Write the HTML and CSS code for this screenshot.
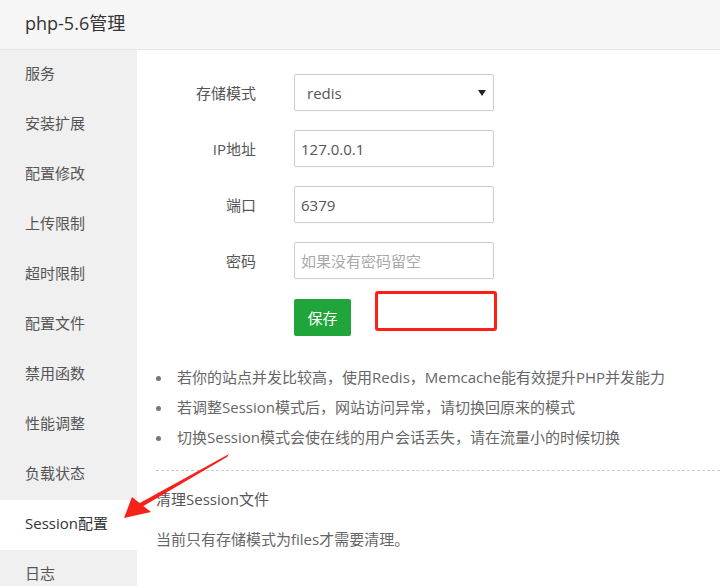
FILE: index.html
```html
<!DOCTYPE html>
<html lang="zh-CN">
<head>
<meta charset="utf-8">
<title>php-5.6管理</title>
<link rel="stylesheet" href="styles.css">
</head>
<body>
<div class="page">
  <div class="header">php-5.6管理</div>
  <div class="main">
    <ul class="sidebar">
      <li>服务</li>
      <li>安装扩展</li>
      <li>配置修改</li>
      <li>上传限制</li>
      <li>超时限制</li>
      <li>配置文件</li>
      <li>禁用函数</li>
      <li>性能调整</li>
      <li>负载状态</li>
      <li class="active">Session配置</li>
      <li>日志</li>
    </ul>
    <div class="content">
      <div class="form">
        <div class="row">
          <label class="label">存储模式</label>
          <div class="select-wrap">
            <select class="field select">
              <option>redis</option>
              <option>files</option>
              <option>memcache</option>
            </select>
          </div>
        </div>
        <div class="row">
          <label class="label">IP地址</label>
          <input class="field" type="text" value="127.0.0.1">
        </div>
        <div class="row">
          <label class="label">端口</label>
          <input class="field" type="text" value="6379">
        </div>
        <div class="row">
          <label class="label">密码</label>
          <input class="field" type="text" placeholder="如果没有密码留空">
        </div>
        <div class="row buttons">
          <span class="label"></span>
          <button class="btn-save">保存</button>
          <span class="red-box"></span>
        </div>
      </div>
      <ul class="tips">
        <li>若你的站点并发比较高，使用Redis，Memcache能有效提升PHP并发能力</li>
        <li>若调整Session模式后，网站访问异常，请切换回原来的模式</li>
        <li>切换Session模式会使在线的用户会话丢失，请在流量小的时候切换</li>
      </ul>
      <div class="clean">
        <div class="clean-title">清理Session文件</div>
        <div class="clean-desc">当前只有存储模式为files才需要清理。</div>
      </div>
    </div>
  </div>
  <svg class="arrow" width="720" height="586" viewBox="0 0 720 586">
    <polygon points="229,454 227,457 140,508 138,504" fill="#f5221b"/>
    <polygon points="124,518 132,497 151,512" fill="#f5221b"/>
  </svg>
</div>
</body>
</html>
```

FILE: styles.css
```css
* { box-sizing: border-box; }
html, body { margin: 0; padding: 0; background: #fff; }
body {
  font-family: "Open Sans", "Noto Sans CJK SC", sans-serif;
  font-size: 15px;
  color: #555;
  width: 720px;
  height: 586px;
  overflow: hidden;
}
.page { position: relative; width: 720px; height: 586px; }
.header {
  height: 50px;
  line-height: 46px;
  padding-left: 25px;
  font-size: 18px;
  color: #333;
  background: #f6f6f6;
  border-bottom: 1px solid #e6e6e6;
}
.main { display: flex; height: 536px; }
.sidebar {
  list-style: none;
  margin: 0;
  padding: 0;
  width: 137px;
  flex: none;
  background: #f0f0f0;
}
.sidebar li {
  height: 50px;
  line-height: 47px;
  padding-left: 25px;
  color: #555;
}
.sidebar li.active { background: #fff; color: #333; }
.content { flex: 1; padding: 24px 0 0 19px; }
.form { display: flex; flex-direction: column; gap: 19px; }
.row { display: flex; align-items: center; height: 37px; }
.label {
  width: 100px;
  text-align: right;
  margin-right: 38px;
  color: #555;
}
.field {
  width: 200px;
  height: 37px;
  border: 1px solid #ccc;
  border-radius: 2px;
  padding: 0 6px;
  font-family: inherit;
  font-size: 15px;
  color: #555;
  background: #fff;
  outline: none;
}
.field::placeholder { color: #a9a9a9; }
.select-wrap { position: relative; width: 200px; height: 37px; }
.select {
  -webkit-appearance: none;
  appearance: none;
  padding-left: 12px;
}
.select-wrap::after {
  content: "";
  position: absolute;
  right: 8px;
  top: 16px;
  border-left: 4px solid transparent;
  border-right: 4px solid transparent;
  border-top: 6px solid #222;
}
.buttons { height: 38px; align-items: flex-start; }
.btn-save {
  width: 57px;
  height: 37px;
  margin-top: 1px;
  background: #20a53a;
  color: #fff;
  border: none;
  border-radius: 2px;
  font-family: inherit;
  font-size: 15px;
  padding: 0;
}
.red-box {
  width: 122px;
  height: 40px;
  margin-left: 24px;
  margin-top: -7px;
  border: 3px solid #ff1f14;
  border-radius: 3px;
}
.tips {
  list-style: none;
  margin: 27px 0 0 0;
  padding: 0 0 17px 0;
  border-bottom: 1px dashed #ccc;
}
.tips li {
  position: relative;
  height: 30px;
  line-height: 29px;
  padding-left: 21px;
  color: #666;
}
.tips li::before {
  content: "";
  position: absolute;
  left: 0;
  top: 13px;
  width: 5px;
  height: 5px;
  border-radius: 50%;
  background: #777;
}
.clean { padding-top: 14px; }
.clean-title { height: 30px; line-height: 29px; color: #555; }
.clean-desc { height: 30px; line-height: 29px; margin-top: 10px; color: #666; }
.arrow { position: absolute; left: 0; top: 0; pointer-events: none; }
```
